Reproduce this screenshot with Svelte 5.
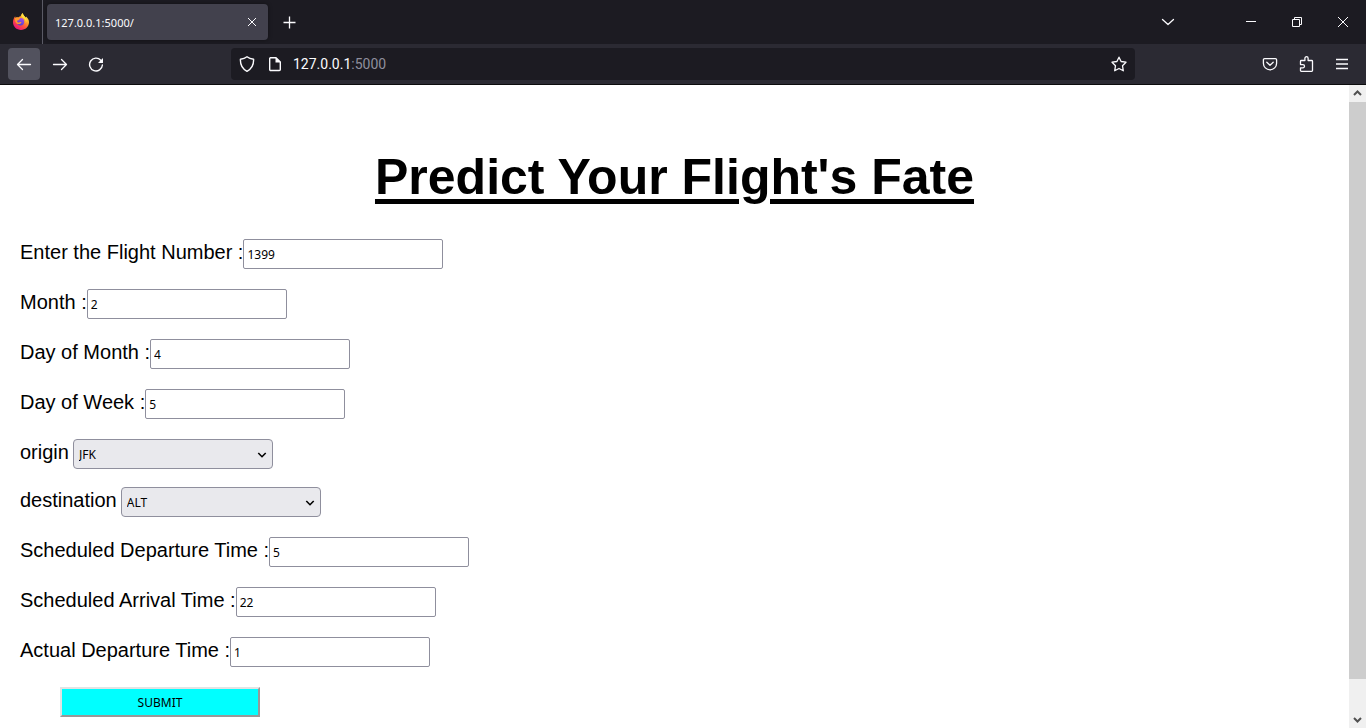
<script>
  const airports = ['JFK', 'ALT', 'DTW', 'SEA', 'MSP'];

  let fields = $state([
    { id: 'flight', label: 'Enter the Flight Number :', value: '1399' },
    { id: 'month', label: 'Month :', value: '2' },
    { id: 'day', label: 'Day of Month :', value: '4' },
    { id: 'week', label: 'Day of Week :', value: '5' },
    { id: 'origin', label: 'origin', value: 'JFK', choice: true },
    { id: 'destination', label: 'destination', value: 'ALT', choice: true },
    { id: 'scheduled-departure', label: 'Scheduled Departure Time :', value: '5' },
    { id: 'scheduled-arrival', label: 'Scheduled Arrival Time :', value: '22' },
    { id: 'actual-departure', label: 'Actual Departure Time :', value: '1' }
  ]);
</script>

<div class="window">
  <header class="tabs">
    <div class="brand">
      <svg width="18" height="18" viewBox="0 0 18 18">
        <defs>
          <linearGradient id="flame" x1="0.85" y1="0.1" x2="0.25" y2="0.95">
            <stop offset="0" stop-color="#fff44f" />
            <stop offset="0.35" stop-color="#ffa02c" />
            <stop offset="0.65" stop-color="#ff4f3f" />
            <stop offset="1" stop-color="#e8157f" />
          </linearGradient>
          <linearGradient id="globe" x1="0.7" y1="0" x2="0.3" y2="1">
            <stop offset="0" stop-color="#a84fe8" />
            <stop offset="1" stop-color="#4b3fd0" />
          </linearGradient>
        </defs>
        <path fill="url(#flame)" d="M10.600 0c.3 1.300 1.200 2.500 2.100 3.400.6.500 1 .9 1.300 1.400V3.500c1.800 1.400 3 3.400 3 5.800 0 4.300-3.500 7.700-8 7.700s-8-3.400-8-7.700c0-2.400.9-4.500 2.200-6 0 .7.100 1.200.4 1.700.8-.6 1.700-.9 2.900-.8C7.300 3.700 8 3.300 8.700 3.200 9 2 9.600.8 10.600 0z" />
        <circle cx="8.500" cy="8.800" r="3.700" fill="url(#globe)" />
        <path fill="#ff9a2e" d="M3 5c1.200-.9 2.600-.9 3.700-.1.6-.3 1.300-.2 1.900 0-.8.5-1.100 1-1.300 1.500-.2.600-.9.700-1.800 1.100-.6.400-.4 1.300.2 1.700.7.600 1.800.4 2.600-.1.500-.2 1.300 0 1.100.5-.7 1.200-2 1.800-3.300 1.500C4.200 10.700 2.700 8.900 3 5z" />
        <path fill="#ffe03e" d="M10.600 0c.3 1.300 1.200 2.500 2.100 3.400 1.900 1.600 2.300 4.500 1.100 6.800.4-3-.9-4.600-2.700-5.500C9.700 4 9.200 1.600 10.600 0z" />
      </svg>
    </div>
    <div class="tab">
      <span>127.0.0.1:5000/</span>
      <button aria-label="Close tab">
        <svg width="16" height="16" viewBox="0 0 16 16"><path d="M4 4l8 8M12 4l-8 8" /></svg>
      </button>
    </div>
    <button class="new" aria-label="New tab">
      <svg width="16" height="16" viewBox="0 0 16 16"><path d="M8.500 2.500v12M2.500 8.500h12" stroke-width="1.300" /></svg>
    </button>
    <div class="fill"></div>
    <button class="list" aria-label="List all tabs">
      <svg width="16" height="16" viewBox="0 0 16 16"><path d="M2.500 5.500L8 10.500l5.500-5" stroke-width="1.300" stroke-linecap="round" stroke-linejoin="round" /></svg>
    </button>
    <button class="system" aria-label="Minimize">
      <svg width="12" height="12" viewBox="0 0 12 12"><path d="M1 5.500h10" /></svg>
    </button>
    <button class="system" aria-label="Restore">
      <svg width="12" height="12" viewBox="0 0 12 12"><path d="M1.500 3.500h7v7h-7zM3.500 3V1.500h7v7H9" /></svg>
    </button>
    <button class="system" aria-label="Close">
      <svg width="12" height="12" viewBox="0 0 12 12"><path d="M1 1l10 10M11 1L1 11" /></svg>
    </button>
  </header>

  <nav class="toolbar">
    <button class="tool active" aria-label="Back">
      <svg width="16" height="16" viewBox="0 0 16 16"><path d="M14.500 8.500h-13M6.500 3.500l-5 5 5 5" stroke-width="1.300" stroke-linecap="round" stroke-linejoin="round" /></svg>
    </button>
    <button class="tool" aria-label="Forward">
      <svg width="16" height="16" viewBox="0 0 16 16"><path d="M1.500 8.500h13M9.500 3.500l5 5-5 5" stroke-width="1.300" stroke-linecap="round" stroke-linejoin="round" /></svg>
    </button>
    <button class="tool" aria-label="Reload">
      <svg width="16" height="16" viewBox="0 0 16 16">
        <path d="M12.800 4.300A6.400 6.400 0 1 0 14.400 9" stroke-width="1.400" stroke-linecap="round" />
        <path d="M15 2v4.500a.5.500 0 0 1-.5.500H10z" fill="#fbfbfe" stroke="none" />
      </svg>
    </button>
    <div class="spacer"></div>
    <div class="address">
      <div class="site">
        <svg width="16" height="16" viewBox="0 0 16 16"><path d="M8 .8c2 1.600 4.200 2.200 6.600 2.500.2 5.200-1.700 9.500-6.600 12C3.100 12.800 1.200 8.500 1.400 3.300 3.800 3 6 2.400 8 .8z" stroke-width="1.400" stroke-linejoin="round" /></svg>
        <svg width="16" height="16" viewBox="0 0 16 16">
          <path d="M3.500 1.700H9l4.300 4.300v7.500a1 1 0 0 1-1 1H3.700a1 1 0 0 1-1-1v-11a1 1 0 0 1 .8-.8z" stroke-width="1.400" stroke-linejoin="round" />
          <path d="M8.500 1v5.500H14z" fill="#fbfbfe" stroke="none" />
        </svg>
      </div>
      <span class="url">127.0.0.1<span>:5000</span></span>
      <button aria-label="Bookmark this page">
        <svg width="16" height="16" viewBox="0 0 16 16"><path d="M8 1.200l2.100 4.300 4.900.7-3.500 3.500.8 5.100L8 12.500l-4.300 2.300.8-5.100L1 6.200l4.900-.7z" stroke-width="1.300" stroke-linejoin="round" /></svg>
      </button>
    </div>
    <div class="spacer"></div>
    <button class="tool" aria-label="Save to Pocket">
      <svg width="16" height="16" viewBox="0 0 16 16"><path d="M2.600 2.600h10.800a1.200 1.200 0 0 1 1.200 1.200v3.400a6.600 6.600 0 0 1-13.200 0V3.800a1.200 1.200 0 0 1 1.200-1.200zM4.800 6.200L8 9.300l3.200-3.100" stroke-width="1.300" stroke-linecap="round" stroke-linejoin="round" /></svg>
    </button>
    <button class="tool" aria-label="Extensions">
      <svg width="16" height="16" viewBox="0 0 16 16"><path d="M6.900 4.500V2.300a1.600 1.600 0 0 1 3.200 0v2.200h3.600a.8.800 0 0 1 .8.800v9.200a.8.800 0 0 1-.8.800H3.300a.8.800 0 0 1-.8-.8v-2.700h2.400a1.600 1.600 0 0 0 0-3.200H2.500V5.300a.8.800 0 0 1 .8-.8z" stroke-width="1.300" stroke-linejoin="round" /></svg>
    </button>
    <button class="tool" aria-label="Open application menu">
      <svg width="16" height="16" viewBox="0 0 16 16"><path d="M2 3.500h12M2 8h12M2 12.500h12" stroke-width="1.300" /></svg>
    </button>
  </nav>

  <div class="view">
    <main>
      <h1>Predict Your Flight's Fate</h1>
      <form onsubmit={(event) => event.preventDefault()}>
        {#each fields as field (field.id)}
          <div class="row" class:choice={field.choice}>
            <label for={field.id}>{field.label}</label>
            {#if field.choice}
              <div class="select">
                <select id={field.id} bind:value={field.value}>
                  {#each airports as airport}
                    <option>{airport}</option>
                  {/each}
                </select>
                <svg width="10" height="6" viewBox="0 0 10 6"><path d="M1.300 1L5 4.700 8.700 1" /></svg>
              </div>
            {:else}
              <input id={field.id} type="text" bind:value={field.value} />
            {/if}
          </div>
        {/each}
        <button class="submit">SUBMIT</button>
      </form>
    </main>
    <div class="scrollbar">
      <svg width="17" height="17" viewBox="0 0 17 17"><path d="M5 10l3.500-3.500L12 10" /></svg>
      <div class="thumb"></div>
      <div class="track"></div>
      <svg width="17" height="17" viewBox="0 0 17 17"><path d="M5 7l3.500 3.500L12 7" /></svg>
    </div>
  </div>
</div>

<style>
  .window {
    height: 100vh;
    display: flex;
    flex-direction: column;
    overflow: hidden;
    font-family: 'Noto Sans', sans-serif;
    color: #fbfbfe;
  }
  button {
    border: 0;
    padding: 0;
    background: none;
    color: inherit;
    font-family: inherit;
  }
  svg {
    display: block;
    flex: none;
    fill: none;
    stroke: #fbfbfe;
  }
  header button,
  nav button {
    display: flex;
    align-items: center;
    justify-content: center;
    flex: none;
  }
  .tabs {
    height: 44px;
    flex: none;
    display: flex;
    align-items: center;
    background: #1c1b22;
  }
  .brand {
    align-self: stretch;
    width: 30px;
    padding-left: 12px;
    margin-right: 4px;
    border-right: 1px solid #5b5b66;
    display: flex;
    align-items: center;
  }
  .brand svg {
    stroke: none;
  }
  .tab {
    box-sizing: border-box;
    width: 221px;
    height: 36px;
    padding: 0 8px;
    border-radius: 4px;
    background: #42414d;
    display: flex;
    align-items: center;
    justify-content: space-between;
    font-size: 11px;
    box-shadow: 0 0 4px rgba(0, 0, 0, 0.4);
  }
  .new {
    width: 32px;
    height: 32px;
    margin-left: 5px;
  }
  .fill {
    flex: 1;
  }
  .list {
    width: 32px;
    height: 32px;
    margin-right: 44px;
  }
  .system {
    width: 46px;
    height: 44px;
  }
  .toolbar {
    height: 40px;
    flex: none;
    padding: 0 8px;
    display: flex;
    align-items: center;
    gap: 4px;
    background: #2b2a33;
    border-bottom: 1px solid #0c0c0d;
  }
  .tool {
    width: 32px;
    height: 32px;
    border-radius: 4px;
  }
  .active {
    background: #52525e;
  }
  .spacer {
    flex: 1;
  }
  .address {
    box-sizing: border-box;
    flex: 8;
    height: 32px;
    padding: 0 8px;
    border-radius: 4px;
    background: #1c1b22;
    display: flex;
    align-items: center;
    gap: 10px;
  }
  .site {
    display: flex;
    gap: 12px;
  }
  .url {
    flex: 1;
    font-family: Roboto, sans-serif;
    font-size: 14px;
    line-height: 18px;
  }
  .url span {
    color: #8f8f9d;
  }
  .view {
    flex: 1;
    min-height: 0;
    display: flex;
    background: #fff;
    color: #000;
  }
  main {
    flex: 1;
    overflow: hidden;
    padding: 63px 20px 0;
    font-family: 'Liberation Sans', Arial, sans-serif;
  }
  h1 {
    margin: 0 0 33px;
    font-size: 50px;
    line-height: 58px;
    text-align: center;
    text-decoration: underline;
    text-decoration-thickness: 5px;
    text-underline-offset: 5px;
  }
  form {
    display: flex;
    flex-direction: column;
    align-items: flex-start;
    font-size: 20px;
  }
  .row {
    height: 30px;
    margin-bottom: 20px;
    display: flex;
    align-items: flex-start;
  }
  .choice {
    gap: 4px;
  }
  .choice:has(#origin) {
    margin-bottom: 18px;
  }
  label {
    line-height: 26px;
  }
  input,
  select {
    box-sizing: border-box;
    width: 200px;
    height: 30px;
    margin: 0;
    border: 1px solid #8f8f9d;
    color: #000;
    font-family: 'Noto Sans', sans-serif;
    font-size: 12px;
  }
  input {
    padding: 0 3px;
    border-radius: 2px;
    background: #fff;
  }
  .select {
    position: relative;
  }
  select {
    display: block;
    padding: 0 5px;
    appearance: none;
    border-radius: 4px;
    background: #e9e9ed;
  }
  .select svg {
    position: absolute;
    right: 6px;
    top: 13px;
    stroke: #000;
    stroke-width: 1.6;
    pointer-events: none;
  }
  .submit {
    box-sizing: border-box;
    width: 200px;
    height: 30px;
    margin-left: 40px;
    border: 2px solid;
    border-color: #e3e3e3 #989898 #989898 #e3e3e3;
    background: #00ffff;
    font-family: 'Noto Sans', sans-serif;
    font-size: 12px;
  }
  .scrollbar {
    width: 17px;
    flex: none;
    display: flex;
    flex-direction: column;
    background: #f0f0f0;
  }
  .scrollbar svg {
    stroke: #505050;
    stroke-width: 2;
  }
  .track {
    flex: 1;
  }
  .thumb {
    flex: 18;
    background: #cdcdcd;
  }
</style>
